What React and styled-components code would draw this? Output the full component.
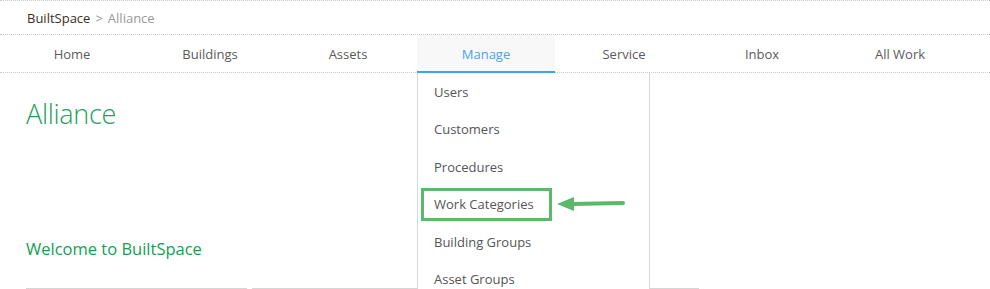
import React from "react";
import styled, { createGlobalStyle, css } from "styled-components";

const GlobalStyle = createGlobalStyle`
  html, body {
    margin: 0;
    padding: 0;
    overflow: hidden;
    background: #fff;
  }
  body {
    font-family: "Open Sans", "Noto Sans", Arial, sans-serif;
    font-size: 13px;
    color: #555;
  }
`;

const Page = styled.div`
  width: 990px;
`;

const Breadcrumb = styled.div`
  height: 33px;
  display: flex;
  align-items: center;
  padding-left: 27px;
  border-top: 1px dotted #c8c8c8;
  border-bottom: 1px dotted #c8c8c8;
  font-size: 13px;
`;

const Crumb = styled.span`
  color: ${(p) => (p.$current ? "#999" : "#3b2f25")};
`;

const Sep = styled.span`
  color: #999;
  margin: 0 5px;
`;

const Nav = styled.nav`
  display: grid;
  grid-template-columns: repeat(7, 138px);
  padding-left: 3px;
  height: 37px;
  border-bottom: 1px dotted #c8c8c8;
  position: relative;
  z-index: 2;
`;

const NavItem = styled.div`
  position: relative;
  display: flex;
  align-items: center;
  justify-content: center;
  color: #5a5a5a;
  font-size: 13px;
  ${(p) =>
    p.$active &&
    css`
      background: #f8f8f8;
      color: #4aa3ee;
      box-shadow: inset 0 -2px 0 #3aa3f3;
      height: 38px;
    `}
`;

const Dropdown = styled.ul`
  position: absolute;
  top: 38px;
  left: 0;
  width: 231px;
  margin: 0;
  padding: 0;
  list-style: none;
  background: #fff;
  border-left: 1px solid #d8d8d8;
  border-right: 1px solid #d8d8d8;
  height: 260px;
  overflow: hidden;
`;

const DropItem = styled.li`
  position: relative;
  height: 37.5px;
  display: flex;
  align-items: center;
  padding-left: 16px;
  color: #555;
  font-size: 13px;
  ${(p) =>
    p.$highlight &&
    css`
      &::after {
        content: "";
        position: absolute;
        left: 3px;
        top: 2px;
        width: 125px;
        height: 27px;
        border: 3px solid #5cb86b;
      }
    `}
`;

const Arrow = styled.svg`
  position: absolute;
  left: 139px;
  top: 10px;
  overflow: visible;
`;

const Content = styled.main`
  padding-left: 26px;
  position: relative;
  z-index: 1;
`;

const Title = styled.h1`
  margin: 0;
  padding-top: 22px;
  font-size: 27px;
  font-weight: 300;
  color: #1fa05c;
  line-height: 38px;
  letter-spacing: -0.3px;
`;

const Welcome = styled.h2`
  margin: 0;
  margin-top: 104px;
  font-size: 16.5px;
  font-weight: 400;
  color: #12a050;
  line-height: 24px;
`;

const Cards = styled.div`
  display: flex;
  gap: 5px;
  margin-top: 27px;
`;

const Card = styled.div`
  width: 221px;
  height: 60px;
  border-top: 1px solid #d6d6d6;
`;

const navItems = ["Home", "Buildings", "Assets", "Manage", "Service", "Inbox", "All Work"];
const manageItems = [
  "Users",
  "Customers",
  "Procedures",
  "Work Categories",
  "Building Groups",
  "Asset Groups",
];

export default function App() {
  return (
    <Page>
      <GlobalStyle />
      <Breadcrumb>
        <Crumb>BuiltSpace</Crumb>
        <Sep>&gt;</Sep>
        <Crumb $current>Alliance</Crumb>
      </Breadcrumb>
      <Nav>
        {navItems.map((item) => (
          <NavItem key={item} $active={item === "Manage"}>
            {item}
            {item === "Manage" && (
              <Dropdown>
                {manageItems.map((m) => (
                  <DropItem key={m} $highlight={m === "Work Categories"}>
                    {m}
                    {m === "Work Categories" && (
                      <Arrow width="68" height="16" viewBox="0 0 68 16">
                        <path d="M0 8 L17 1 L17 15 Z" fill="#5cb86b" />
                        <path d="M14 8 Q40 7.5 66 7" stroke="#5cb86b" strokeWidth="4" strokeLinecap="round" fill="none" />
                      </Arrow>
                    )}
                  </DropItem>
                ))}
              </Dropdown>
            )}
          </NavItem>
        ))}
      </Nav>
      <Content>
        <Title>Alliance</Title>
        <Welcome>Welcome to BuiltSpace</Welcome>
        <Cards>
          <Card />
          <Card />
          <Card />
        </Cards>
      </Content>
    </Page>
  );
}
